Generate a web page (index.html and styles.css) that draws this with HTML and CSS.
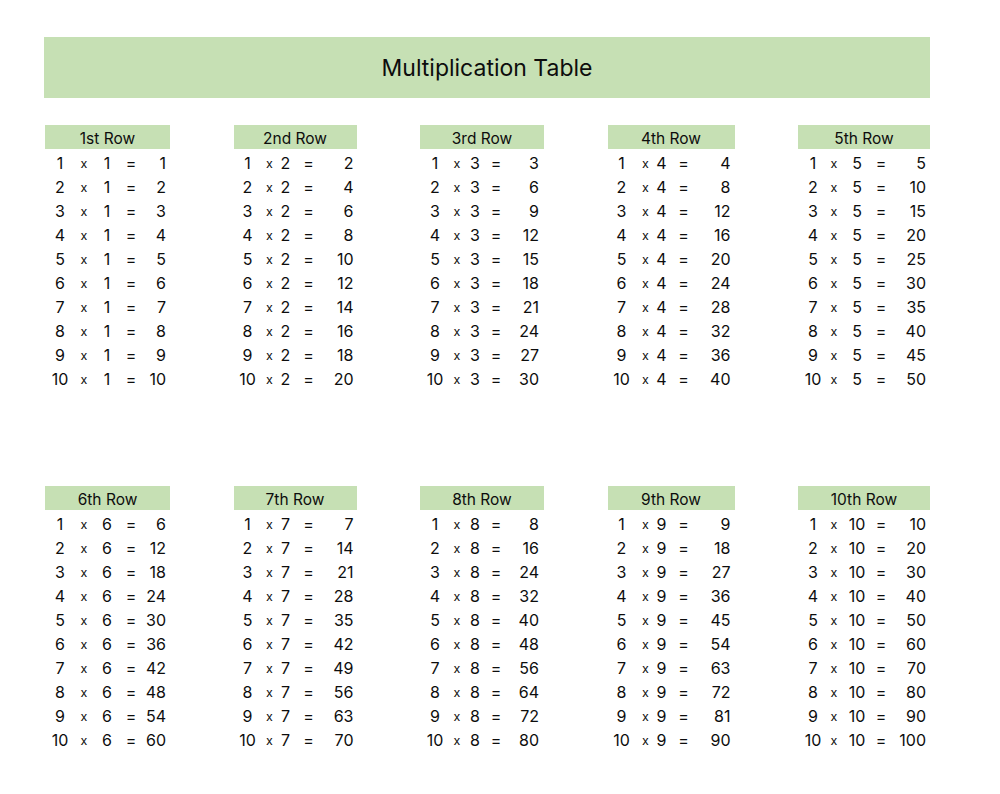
FILE: index.html
```html
<!DOCTYPE html>
<html>
<head>
<meta charset="utf-8">
<link rel="stylesheet" href="styles.css">
</head>
<body>
<div class="page">
  <div class="banner">Multiplication Table</div>
  <div class="grid" id="grid"></div>
</div>
<script src="script.js"></script>
</body>
</html>
```
FILE: styles.css
```css
html, body { margin: 0; padding: 0; background: #fff; }
body { font-family: "Inter", "Open Sans", sans-serif; color: #0d0d0d; }
.page { padding: 37px 0 0 44px; width: 886px; }
.banner {
  background: #c6e0b4;
  height: 61px;
  display: flex; align-items: center; justify-content: center;
  font-size: 23px; font-weight: 400; padding-top: 1px; box-sizing: border-box;
}
.grid {
  margin-top: 27px;
  margin-left: 1px;
  display: grid;
  grid-template-columns: 125px 123px 124px 127px 132px;
  column-gap: 63.5px;
  row-gap: 97px;
}
.block { display: flex; flex-direction: column; }
.head {
  background: #c6e0b4;
  height: 24px; line-height: 27px;
  text-align: center; font-size: 15.5px;
}
.row {
  display: grid; height: 24px; align-items: center;
  font-size: 16px; padding-top: 3px; box-sizing: border-box;
}
.row span { text-align: center; }
.row .x { font-size: 12.5px; padding-top: 2px; }
.row .res { text-align: right; }
.c1 .row { grid-template-columns: 30px 18px 28px 20px 1fr; padding-right: 4px; }
.c2 .row { grid-template-columns: 28px 16px 16px 30px 1fr; padding-right: 3px; }
.c3 .row { grid-template-columns: 30px 14px 22px 20px 1fr; padding-right: 5px; }
.c4 .row { grid-template-columns: 28px 20px 12px 32px 1fr; padding-right: 4px; }
.c5 .row { grid-template-columns: 30px 12px 34px 14px 1fr; padding-right: 4px; }
```
FILE: script.js
```js
const names = ["1st","2nd","3rd","4th","5th","6th","7th","8th","9th","10th"];
const grid = document.getElementById("grid");
for (let n = 1; n <= 10; n++) {
  const b = document.createElement("div");
  b.className = "block c" + (((n - 1) % 5) + 1);
  let html = '<div class="head">' + names[n - 1] + ' Row</div>';
  for (let i = 1; i <= 10; i++) {
    html += '<div class="row"><span>' + i + '</span><span class="x">x</span><span>' + n +
      '</span><span>=</span><span class="res">' + (i * n) + '</span></div>';
  }
  b.innerHTML = html;
  grid.appendChild(b);
}
```
